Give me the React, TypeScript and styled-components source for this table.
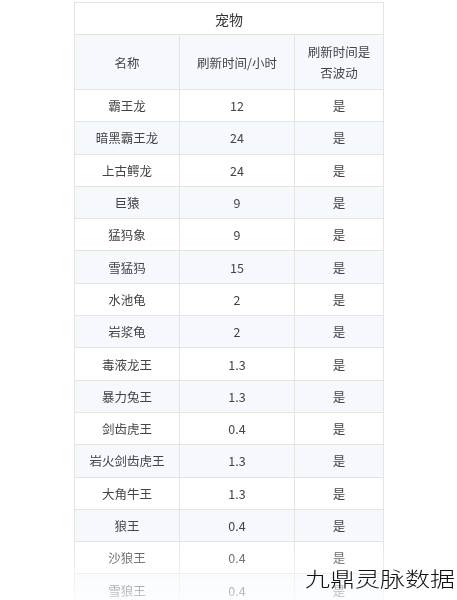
import React from 'react';
import styled, { createGlobalStyle } from 'styled-components';

const Global = createGlobalStyle`
  html, body { margin:0; padding:0; background:#fff; }
  body { font-family: "Noto Sans CJK SC", "Noto Sans", sans-serif; color:#444; }
`;

const Page = styled.div`
  position:relative; width:457px; height:600px; overflow:hidden; background:#fff;
  padding:2px 0 0 74px; box-sizing:border-box;
`;
const Fade = styled.div`
  -webkit-mask-image: linear-gradient(to bottom, #000 0, #000 535px, rgba(0,0,0,.25) 600px);
  mask-image: linear-gradient(to bottom, #000 0, #000 535px, rgba(0,0,0,.25) 600px);
`;
const Table = styled.table`
  width:309px; border-collapse:collapse; table-layout:fixed;
  font-size:12.5px; color:#444; text-align:center;
  td, th { border:1px solid #e3e5df; padding:0; font-weight:400; }
`;
const TitleCell = styled.th`
  height:31px; font-size:14px; color:#333; background:#fff;
`;
const HeadRow = styled.tr`
  background:#f5f8fc;
  th { height:54px; line-height:21px; }
`;
const Row = styled.tr<{ $alt: boolean }>`
  background:${p => (p.$alt ? '#f5f8fc' : '#fff')};
  td { height:31.3px; }
`;
const Mark = styled.div`
  position:absolute; right:2px; bottom:11px;
  font-size:25px; line-height:1; font-weight:300; color:#111;
  transform:scaleY(0.82); transform-origin:bottom right;
  font-family: "Noto Sans CJK SC", sans-serif;
`;

const rows: [string, string][] = [
  ['霸王龙', '12'],
  ['暗黑霸王龙', '24'],
  ['上古鳄龙', '24'],
  ['巨猿', '9'],
  ['猛犸象', '9'],
  ['雪猛犸', '15'],
  ['水池龟', '2'],
  ['岩浆龟', '2'],
  ['毒液龙王', '1.3'],
  ['暴力兔王', '1.3'],
  ['剑齿虎王', '0.4'],
  ['岩火剑齿虎王', '1.3'],
  ['大角牛王', '1.3'],
  ['狼王', '0.4'],
  ['沙狼王', '0.4'],
  ['雪狼王', '0.4'],
];

export default function App() {
  return (
    <>
      <Global />
      <Page>
        <Fade>
          <Table>
            <colgroup>
              <col style={{ width: 105 }} />
              <col style={{ width: 115 }} />
              <col style={{ width: 89 }} />
            </colgroup>
            <thead>
              <tr><TitleCell colSpan={3}>宠物</TitleCell></tr>
              <HeadRow>
                <th>名称</th>
                <th>刷新时间/小时</th>
                <th>刷新时间是<br />否波动</th>
              </HeadRow>
            </thead>
            <tbody>
              {rows.map(([name, hours], i) => (
                <Row key={name} $alt={i % 2 === 1}>
                  <td>{name}</td>
                  <td>{hours}</td>
                  <td>是</td>
                </Row>
              ))}
            </tbody>
          </Table>
        </Fade>
        <Mark>九鼎灵脉数据</Mark>
      </Page>
    </>
  );
}
